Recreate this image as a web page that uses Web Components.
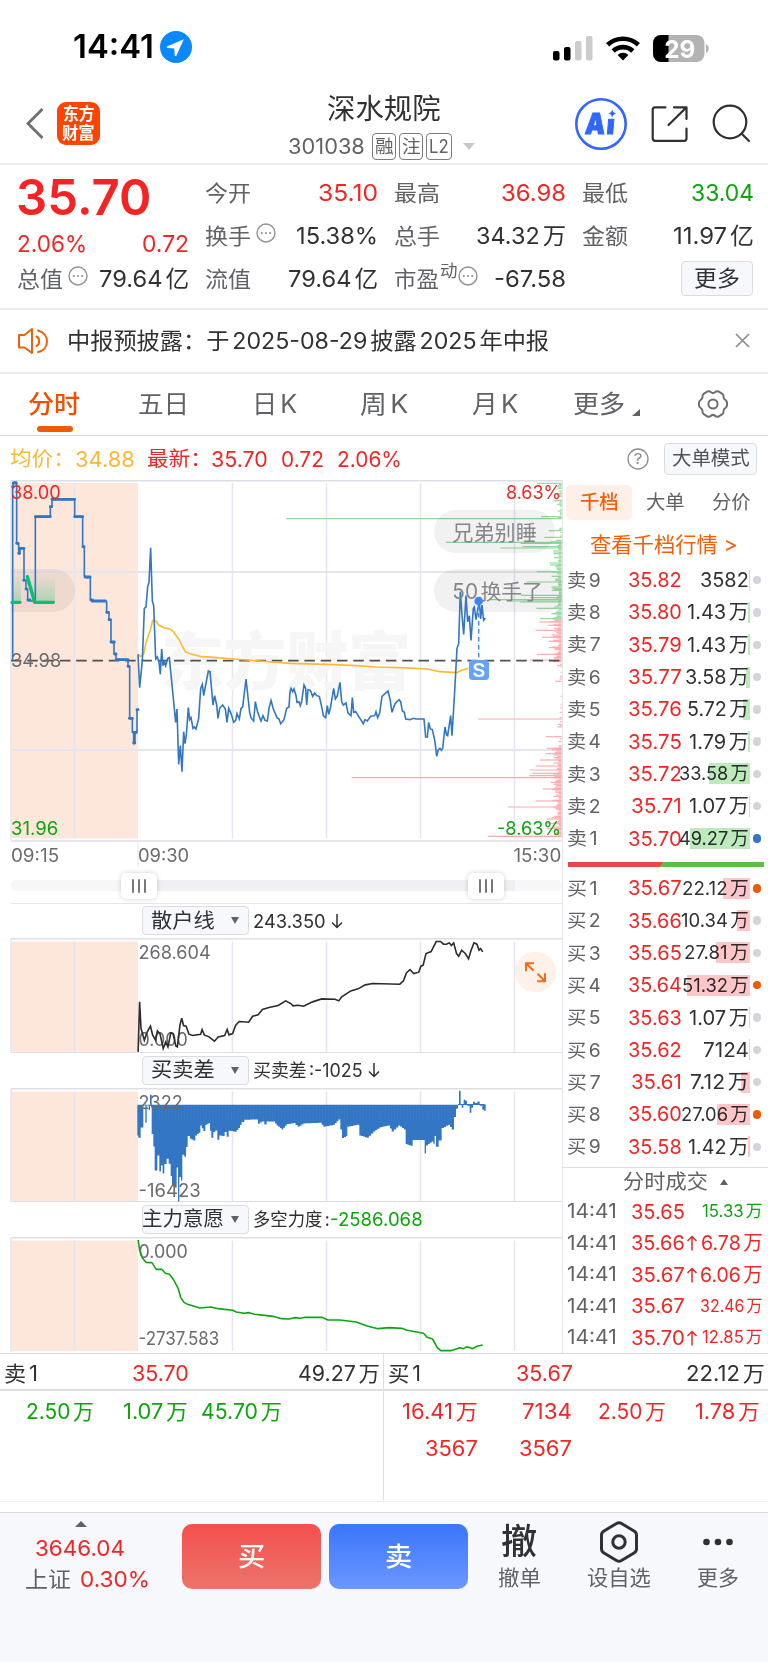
<!DOCTYPE html>
<html lang="zh-CN">
<head>
<meta charset="utf-8">
<title>深水规院 301038</title>
<style>
html,body{margin:0;padding:0}
body{width:768px;height:1662px;overflow:hidden;background:#fff;color:#303133;font-family:Inter,"Noto Sans CJK SC",sans-serif;line-height:1;text-autospace:normal}
</style>
</head>
<body>
<stock-page></stock-page>
<script>
const RED='#f52424',GREEN='#0ca50c',GRAY='#606266',DARK='#303133',LINE='#dcdee5',BLUE='#3276c4';
class Base extends HTMLElement{
  connectedCallback(){
    if(this.shadowRoot)return;
    const r=this.attachShadow({mode:'open'});
    r.innerHTML='<style>*{box-sizing:border-box}:host{display:block;box-sizing:border-box}svg{display:block}'+this.css()+'</style>'+this.html();
    this.ready&&this.ready(r);
  }
  css(){return''} html(){return''}
}
// Text whose glyphs span a given width; side bearings hang outside the box
customElements.define('fit-text',class extends Base{
  css(){
    const g=n=>this.getAttribute(n),s=g('s')||20;
    return `:host{display:inline-block;flex:none;white-space:nowrap;width:${g('w')}px;font-size:${s}px;line-height:1;${g('c')?`color:${g('c')};`:''}font-weight:${g('b')||400}}span{display:inline-block;transform-origin:0 50%;margin-left:${-.045*s}px}`;
  }
  html(){return '<span><slot></slot></span>'}
  ready(r){
    const s=r.querySelector('span'),n=s.getBoundingClientRect().width;
    if(n)s.style.transform=`scaleX(${(+this.getAttribute('w')+.09*this.getAttribute('s'))/n})`;
  }
});
const T=(t,w,s,c='',b=400)=>`<fit-text w="${w}" s="${s}" c="${c}" b="${b}">${t}</fit-text>`;
const ST=(t,x,cy,w,s,c,extra='')=>`<text x="${x-.03*s}" y="${cy+s*.364}" font-size="${s}" fill="${c}" textLength="${w+.07*s}" lengthAdjust="spacingAndGlyphs" ${extra}>${t}</text>`;

customElements.define('status-bar',class extends Base{
  css(){return `:host{height:95px;padding:2px 58px 0 74px;display:flex;align-items:center;justify-content:space-between;color:#000}.l,.r{display:flex;align-items:center}.l{gap:8px;padding-bottom:3px}.r{padding-bottom:3px}`}
  html(){return `<div class="l">${T('14:41',78,32,'#000',600)}
  <svg width="32" height="32" viewBox="0 0 32 32"><circle cx="16" cy="16" r="16" fill="#0a88fe"/><path d="M23.8 8.2 7.4 15.3c-1 .5-.7 1.8.3 1.8l6.6.3.4 6.8c.1 1 1.4 1.3 1.8.3z" fill="#fff"/></svg></div>
  <svg width="157" height="28" viewBox="553 32 157 28">
  <rect x="553" y="48" width="6.5" height="9.5" rx="2"/><rect x="564" y="44" width="6.5" height="13.5" rx="2"/><rect x="575" y="38" width="6.5" height="19.5" rx="2" fill="#ccc"/><rect x="586" y="33" width="6.5" height="24.5" rx="2" fill="#ccc"/>
  <g fill="none" stroke="#000" stroke-width="4.6"><path d="M607.6 41.8a22.5 22.5 0 0 1 30.8 0"/><path d="M613.2 48a14.3 14.3 0 0 1 19.6 0"/></g><path d="M623 57.5 617.6 52a7.8 7.8 0 0 1 10.8 0z"/>
  <clipPath id="b"><rect x="653" y="32" width="51.500" height="27" rx="8"/></clipPath><g clip-path="url(#b)"><path fill="#b3b3b3" d="M653 32h52v27h-52z"/><path d="M653 32h15.500v27H653z"/></g><path d="M706 41c3.500 1 3.500 8 0 9z" fill="#b3b3b3"/>
  ${ST('29',665,45.7,29.500,24.500,'#fff','font-weight="700"')}</svg>`}
});

customElements.define('nav-header',class extends Base{
  css(){return `:host{height:70px;border-bottom:2px solid #ececee;display:grid;grid-template-columns:288px 1fr 193px;padding:0}
  .l{display:flex;align-items:center;gap:13px;padding:0 0 11px 26px}.logo{width:43px;height:43px;border-radius:9px;background:#fd4402;display:flex;flex-direction:column;align-items:center;justify-content:center;gap:2px;padding-top:0}
  .m{padding-left:1px}.t{display:flex;justify-content:center;width:190px;height:29px}.c{display:flex;align-items:center;height:27px;margin-top:9px}
  .bd{height:27px;border:1.500px solid #7d7d80;border-radius:4px;display:flex;align-items:center;justify-content:center;margin-right:3px}
  .tri{border:6px solid transparent;border-top:7px solid #c8c8cb;border-bottom:0;margin-left:11px}`}
  html(){return `<div class="l"><svg width="18" height="31" viewBox="0 0 18 31"><path d="M16.500 1 2 15.500 16.500 30" fill="none" stroke="#6e6e70" stroke-width="2.800"/></svg>
  <div class="logo">${T('东方',30,17,'#fff',700)}${T('财富',31,17,'#fff',700)}</div></div>
  <div class="m"><div class="t">${T('深水规院',111,28,'#303133')}</div><div class="c">${T('301038',75,21,GRAY)}<span style="width:8px"></span><span class="bd" style="width:24px">${T('融',17,18,GRAY)}</span><span class="bd" style="width:24px">${T('注',17,18,GRAY)}</span><span class="bd" style="width:26px;margin:0">${T('L2',18,18,GRAY)}</span><i class="tri"></i></div></div>
  <svg width="193" height="66" viewBox="575 95 193 66"><circle cx="601" cy="124" r="24.700" fill="none" stroke="#3366ff" stroke-width="2.600"/>
  <g transform="translate(584 110.500) skewX(-5)" fill="#3366ff"><text x="2.500" y="23" font-size="29" font-weight="900" textLength="20" lengthAdjust="spacingAndGlyphs" stroke="#3366ff" stroke-width="1">A</text><text x="24" y="23" font-size="27" font-weight="900" textLength="8" lengthAdjust="spacingAndGlyphs" stroke="#3366ff">ı</text></g>
  <path d="M612.300 109.500c1 2.800 1.300 3 4 4-2.700 1-3 1.300-4 4-1-2.700-1.300-3-4-4 2.700-1 3-1.200 4-4z" fill="#3366ff"/>
  <g fill="none" stroke="#2f3032" stroke-width="2.200" stroke-linecap="round" stroke-linejoin="round"><path d="M665.500 107.300h-10.300q-2.500 0-2.500 2.500v28.500q0 2.500 2.500 2.500h29q2.300 0 2.300-2.500v-9.800M674 107.300h12.500V119M686 107.800 668.500 125"/><circle cx="730" cy="122" r="16.300"/><path d="m742 134 7 7"/></g></svg>`}
});

const more=`<svg width="20" height="20" viewBox="0 0 20 20"><circle cx="10" cy="10" r="9" fill="none" stroke="#8f9196" stroke-width="1.400"/><g fill="#8f9196"><circle cx="5.800" cy="10" r="1.100"/><circle cx="10" cy="10" r="1.100"/><circle cx="14.200" cy="10" r="1.100"/></g></svg>`;
customElements.define('quote-panel',class extends Base{
  css(){return `:host{height:145px;border-bottom:2px solid #ececee;display:grid;grid-template-columns:170px 171px 170px 170px;column-gap:18px;padding:7px 16px 0 18px}
  .col{display:grid;grid-template-rows:43px 43px 43px}.col.f{grid-template-rows:50px 44px 27px}.r{display:flex;align-items:center;justify-content:space-between}.k{display:flex;align-items:center;margin-top:-2px}.k svg{margin:-6px 0 0 2px}sup{display:flex;margin:-15px -1px 0 3px;font-size:0;line-height:0;vertical-align:baseline}
  .btn{width:72px;height:35px;border:1px solid #dadce4;border-radius:4px;background:#f7f8fb;display:flex;align-items:center;justify-content:center;margin:-3px 0 0 auto}`}
  html(){
    const r=(k,kw,v,vw,c=DARK,x='')=>`<div class="r"><span class="k">${T(k,kw,22,GRAY)}${x}</span>${T(v,vw,23,c)}</div>`;
    return `<div class="col f"><div class="r" style="align-items:flex-start">${T('35.70',131,50,RED,600)}</div><div class="r">${T('2.06%',68,23,RED)}${T('0.72',45,23,RED)}</div>${r('总值',44,'79.64亿',88,DARK,`<span style="width:4px"></span>${more}`)}</div>
    <div class="col">${r('今开',44,'35.10',58,RED)}${r('换手',44,'15.38%',80,DARK,`<span style="width:4px"></span>${more}`)}${r('流值',44,'79.64亿',88)}</div>
    <div class="col">${r('最高',44,'36.98',63,RED)}${r('总手',44,'34.32万',88)}${r('市盈',43,'-67.58',70,DARK,`<sup>${T('动',16,17,GRAY)}</sup>${more}`)}</div>
    <div class="col">${r('最低',44,'33.04',61,GREEN)}${r('金额',44,'11.97亿',79)}<div class="r"><span class="btn">${T('更多',44,22,DARK)}</span></div></div>`}
});

customElements.define('notice-bar',class extends Base{
  css(){return `:host{height:63.500px;border-bottom:2px solid #ececee;display:flex;align-items:center;padding:0 18px}.x{margin-left:auto}`}
  html(){return `<svg width="50" height="28" viewBox="0 0 50 28"><g fill="none" stroke="#f0600a" stroke-width="2" stroke-linejoin="round" stroke-linecap="round"><path d="M1 8h5.500L14 2v24l-7.500-5.500H1z"/><path d="M18.500 9.500c3.500 1.500 3.500 8 0 9.500M20 3.500c12 3 12 19 0 21.500"/></g></svg>${T('中报预披露：于2025-08-29披露2025年中报',480,22.500,DARK)}<svg class="x" width="15" height="15" viewBox="0 0 15 15"><path d="m1 1 13 13M14 1 1 14" stroke="#8a8c90" stroke-width="1.700"/></svg>`}
});

customElements.define('period-tabs',class extends Base{
  css(){return `:host{height:62.500px;border-bottom:1.500px solid #d9dbe2;display:grid;grid-template-columns:109px 110px 111px 110px 110px 98px 120px;color:${GRAY}}
  div{display:flex;align-items:center;justify-content:center;position:relative}.on{color:#f05a05}.on:after{content:"";position:absolute;bottom:3.500px;width:36px;height:6px;border-radius:3px;background:#f05a05}
  svg.t{position:absolute;right:18px;bottom:19px}`}
  html(){return `<div class="on">${T('分时',50,25,'#f05000',500)}</div><div>${T('五日',49,25)}</div><div>${T('日K',43,25)}</div><div style="padding-right:2px">${T('周K',46,25)}</div><div>${T('月K',44,25)}</div><div>${T('更多',50,25)}<svg class="t" style="right:8px" width="8" height="7"><path d="M8 0v7H0z" fill="#606266"/></svg></div>
  <div style="padding-left:10px"><svg width="32" height="32" viewBox="-16 -16 32 32"><g fill="none" stroke="#6c6e72" stroke-width="2"><path d="M-5.500-12.500q2-.8 3.500.8 2 1.600 4 0 1.500-1.600 3.500-.8l3.800 2.300q1.500 1.200 1.200 3.200 0 2.200 2 3.200 1.500.8 1.500 2.600v2.400q0 1.800-1.500 2.600-2 1-2 3.200.3 2-1.200 3.200l-3.800 2.300q-2 .8-3.500-.8-2-1.600-4 0-1.500 1.600-3.500.8l-3.800-2.300q-1.500-1.200-1.200-3.200 0-2.200-2-3.200-1.500-.8-1.500-2.600v-2.400q0-1.800 1.500-2.600 2-1 2-3.200-.3-2 1.200-3.200z"/><circle r="4.600"/></g></svg></div>`}
});

customElements.define('legend-bar',class extends Base{
  css(){return `:host{height:46px;display:flex;align-items:center;padding:0 11px 0 11px;margin-bottom:0}.b{width:93px;height:32px;border:1px solid #dadce4;border-radius:4px;background:#f7f8fb;display:flex;align-items:center;justify-content:center;margin-left:15px}svg{margin-left:auto}`}
  html(){const Y='#fbb836',s=n=>`<span style="width:${n}px"></span>`;return `${T('均价：',63,20.500,Y)}${s(2)}${T('34.88',58,21,Y)}${s(14)}${T('最新：',63,20.500,RED)}${s(1)}${T('35.70',55,21,RED)}${s(15)}${T('0.72',41,21,RED)}${s(15)}${T('2.06%',63,21,RED)}
  <svg width="22" height="22" viewBox="-11 -11 22 22"><circle r="10" fill="none" stroke="#8a8c90" stroke-width="1.300"/>${ST('?',-4,0,8,15,'#8a8c90')}</svg><span class="b">${T('大单模式',76,19.500,'#505256')}</span>`}
});

const grid=(y0,y1)=>`<path d="M11 ${y0}H138V${y1}H11z" fill="#fde6da"/><path d="M11 ${y0-3}V${y1+2}M74.500 ${y0}V${y1}M232.500 ${y0}V${y1}M326.500 ${y0}V${y1}M420.500 ${y0}V${y1}M514.500 ${y0}V${y1}" stroke="#e3e6ee" stroke-width="1.500"/>`;
customElements.define('minute-chart',class extends Base{
  css(){return `:host{height:391px}path,line{vector-effect:non-scaling-stroke}`}
  depth(){
    let s='',seed=7;const rnd=()=>(seed=(seed*16807)%2147483647)/2147483647;
    const g=[[25,770],[77,820],[125,783],[131,19],[167,806],[187,793],[202,498],[205,722],[215,727],[219,661],[234,821],[270,810],[290,770],[321,740],[346,815],[361,723],[368,750],[374,630],[378,690],[381,720],[400,769],[416,820],[431,780]];
    const r=[[441,778],[451,804],[466,767],[487,786],[499,806],[518,806],[538,770],[555,750],[619,826],[732,594],[785,798],[820,800],[836,796],[855,779],[873,767],[885,750],[895,757],[902,748],[908,215],[922,812],[942,788],[978,767],[996,684],[1032,800],[1045,795],[1060,800],[1084,624]];
    let m=(arr,c)=>arr.forEach(([y,x])=>s+=`<path d="M${x} ${y}H845" stroke="${c}"/>`);
    for(let y=28;y<1088;y+=4){const q=y<130?.75:y<200?.35:y>560&&y<810?.35:1;if(rnd()>q)continue;const d=y>560&&y<810?12:y<200?18:30;s+=`<path d="M${845-3-rnd()*rnd()*d-(q==1?5:0)} ${y}H845" stroke="${y<436?'#93dc9b':'#ffa9ad'}"/>`}
    m(g,'#93d89a');m(r,'#ffa9ad');return s}
  html(){return `<svg width="563" height="391" viewBox="0 480 563 391">
  ${grid(483,838.5)}<path d="M11 480.700H563M11 841H563" stroke="#dcdee6" stroke-width="1.600"/><path d="M11 572H562M11 750H562" stroke="#e3e6ee" stroke-width="1.800"/><path d="M138 841v25" stroke="#e3e6ee"/>
  <text x="161" y="684" font-size="63" font-weight="900" fill="#f6f6f7" textLength="250">东方财富</text>
  <g transform="translate(280 475) scale(.33333)" fill="none" stroke-width="1.150">${this.depth()}</g>
  <path d="M434 531.500a21.500 21.500 0 0 1 21.500-21.500H533.500a21.500 21.500 0 0 1 0 43H455.500a21.500 21.500 0 0 1-21.500-21.500zM434 590.500a21.500 21.500 0 0 1 21.500-21.500H549q12 3 13 14v15q-2 12-13 14H455.500a21.500 21.500 0 0 1-21.500-21.500zM11 569H53.500a21.500 21.500 0 0 1 0 43H11z" fill="#000" fill-opacity=".055"/>
  <path d="M11 660.700H562" stroke="#505050" stroke-width="1.700" stroke-dasharray="10.500 5.800"/>
  <linearGradient id="g" x1="0" y1="0" x2="0" y2="1"><stop stop-color="#08c070" stop-opacity="0"/><stop offset="1" stop-color="#08c070" stop-opacity=".28"/></linearGradient><path d="M12 575h9v27h-9zM27 575h28v27H34z" fill="url(#g)"/>
  <g transform="translate(0 475) scale(.33333)" fill="none" stroke="${BLUE}" stroke-width="1.600" stroke-linejoin="round">
  <path d="M38 556V35L41 22H50V205H56V236H60V219L72 222V315H78V342H83V374L90 378H106V125H151V95H156V73H224V125H248V215H253V301L260 308 271 306V374L276 378H316L320 381V412H327V434H333V501L342 504V538L348 540V554H384V574H389V730H397V772H401V805H405V772H411V704"/>
  <path d="M106 125h45M156 73h68M224 125h24M276 378h40M350 554h34M388 730h9M255 306h15M273 375h4M40 24h8M38 35h1M50 205h4M56 235h2M60 220h12M71 316h2M78 342h2M84 375h6M151 95h4M249 215h3M320 412h5M327 434h4M333 501h10M345 537h3M384 574h3M401 804h3M403 772h6M411 704h3" stroke-width="2.900" stroke-linecap="round"/>
  <path stroke="#ffb832" d="M415 538 421 544 431 538 438 502 446 480 452 462 458 436 468 438 476 450 492 458 512 463 520 470 536 492 548 516 556 530 570 536 600 544 640 547 700 552 780 558 870 565 980 568 1070 572 1130 576 1200 578 1280 582 1320 590 1370 593 1385 586 1405 580"/>
  <path stroke-linejoin="miter" d="M414 538 419 638 427 556 433 400 438 396 443 335 447 322 452 218 457 378 461 392 467 552 472 546 477 562 481 598 485 522 489 572 493 560 497 572 503 550 508 548 527 742 531 702 536 868 541 812 546 890 551 770 555 806 559 780 565 698 569 734 573 728 579 760 583 756 588 762 596 730 602 640 607 628 611 662 625 588 630 590 639 690 644 662 650 690 654 730 659 700 668 690 676 702 681 742 686 700 694 718 701 742 707 736 711 716 718 732 723 700 728 696 738 612 749 712 753 728 761 738 766 680 773 712 783 738 789 722 795 736 802 738 807 700 813 676 820 702 831 728 837 732 842 746 852 734 860 700 867 696 870 650 873 640 878 650 882 642 888 662 891 682 897 680 901 692 905 680 912 630 917 640 920 690 924 644 931 646 938 664 944 654 950 662 958 664 966 700 970 722 977 728 982 692 986 718 991 700 1001 640 1006 672 1012 662 1020 622 1025 680 1030 690 1038 684 1044 714 1053 722 1057 668 1061 712 1067 710 1090 746 1095 734 1102 738 1112 724 1124 722 1128 710 1133 728 1139 714 1146 664 1164 648 1170 672 1176 712 1185 686 1197 674 1202 680 1207 708 1213 712 1217 732 1230 734 1240 730 1248 732 1272 732 1277 786 1282 786 1286 742 1291 762 1297 764 1305 800 1310 844 1315 824 1320 820 1324 826 1328 820 1335 756 1340 780 1343 782 1352 722 1356 782 1364 650 1371 520 1376 506 1381 350 1386 420 1391 478 1398 362 1403 440 1408 422 1413 496 1420 400 1423 396 1428 434 1434 400 1438 380 1442 432 1446 390 1451 436 1456 430"/>
  <path d="M36 382H60M82 305 104 382H160" stroke="#08bf72" stroke-width="3.400" stroke-linecap="round"/></g>
  <path d="M478.700 605v56" stroke="#3d8bfd" stroke-width="1.400" stroke-dasharray="4.500 3.500"/><circle cx="478.700" cy="601" r="4.300" fill="#3d85f0"/><rect x="469" y="660" width="20" height="20" rx="3.500" fill="#62a3fb"/>${ST('S',472.700,670,12,18,'#fff','font-weight="600"')}
  ${ST('兄弟别睡',453,532,83,21,'#85868a')}${ST('50换手了',453,591.500,89,21,'#85868a')}
  ${ST('38.00',11.500,492.700,48.500,18,RED)}${ST('34.98',11.500,660.500,49,18,'#6a6b6e')}${ST('31.96',11.500,828,46,18,'#0ca50c')}${ST('8.63%',506.500,492.700,54,18,RED)}${ST('-8.63%',497.500,828,63,18,'#0ca50c')}
  ${ST('09:15',11.500,855.500,47,18,'#6a6b6e')}${ST('09:30',138.500,855.500,50,18,'#6a6b6e')}${ST('15:30',514,855.500,46.500,18,'#6a6b6e')}</svg>`}
});

customElements.define('range-slider',class extends Base{
  css(){return `:host{height:33px;margin-left:11px;display:grid;align-items:center;padding-bottom:4px;position:relative;border-bottom:1.500px solid #e4e6eb}.t{height:11px;border-radius:5px;background:linear-gradient(90deg,#f7f7fa 128px,#f0f0f4 128px 504px,#f7f7fa 504px)}
  i{position:absolute;top:2px;width:36px;height:26px;border-radius:5px;background:#fff;box-shadow:0 0 5px rgba(0,0,0,.18);display:flex;gap:3.500px;align-items:center;justify-content:center}b{width:2.200px;height:14px;background:#77787c;border-radius:1px}`}
  html(){return `<div class="t"></div><i style="left:110px"><b></b><b></b><b></b></i><i style="left:457px"><b></b><b></b><b></b></i>`}
});

customElements.define('indicator-head',class extends Base{
  css(){return `:host{height:${this.getAttribute('h')}px;flex:none;display:flex;align-items:center;padding-left:142px;font-size:19px;color:${DARK}}.b{width:107px;height:29px;border:1px solid #d9dce3;border-radius:4px;background:#f7f8fb;display:flex;align-items:center;padding:0 9px 0 ${this.hasAttribute('wide')?0:9}px;justify-content:space-between;margin-right:5px}i{border:4px solid transparent;border-top:7px solid #606266;border-bottom:0}`}
  html(){const w=this.hasAttribute('wide');return `<span class="b">${T(this.getAttribute('name'),w?80:62,20.500,DARK)}<i></i></span><slot></slot>`}
});

const barPts=[[22,150],[25,157],[32,126],[40,60],[46,112],[50,60],[56,74],[60,60],[65,146],[70,183],[74,255],[82,210],[88,258],[93,240],[98,264],[103,236],[110,220],[116,235],[122,272],[126,300],[135,306],[140,246],[144,348],[148,275],[153,285],[157,208],[163,214],[168,185],[173,152],[180,160],[190,165],[196,150],[206,142],[211,120],[220,137],[226,118],[236,113],[240,136],[244,157],[250,140],[256,135],[262,163],[268,150],[278,152],[284,140],[290,154],[296,136],[315,139],[325,128],[335,110],[343,103],[380,102],[384,115],[395,108],[403,117],[410,108],[430,108],[440,120],[455,132],[470,116],[490,113],[503,124],[520,114],[570,112],[580,124],[610,118],[625,102],[631,132],[636,158],[648,152],[652,124],[680,118],[688,150],[710,157],[730,138],[748,126],[775,120],[785,138],[805,120],[822,132],[827,176],[842,181],[848,164],[884,204],[888,180],[905,168],[910,175],[914,152],[918,184],[926,165],[935,128],[955,118],[965,132],[972,95],[978,70],[984,58]];
customElements.define('sub-chart',class extends Base{
  css(){return `:host{display:block;flex:none}path{vector-effect:non-scaling-stroke}`}
  html(){
    const k=this.getAttribute('kind');
    const top=k=='a'?938.5:k=='b'?1088.3:1237.7,H=k=='a'?115:k=='b'?114:115.3,y0=top+2.800,y1=k=='a'?1051.500:k=='b'?1201:1351;
    let body='';
    if(k=='a')body=ST('268.604',139,952,71,18,'#6a6b6e')+ST('0.000',139,1039.500,48,18,'#6a6b6e')+`<g transform="translate(0 900) scale(.3635 .33333)"><path fill="none" stroke="#2b2b2b" stroke-width="1.600" d="M380 455 384 305 388 385 392 400 397 420 405 395 414 378 420 405 428 420 433 392 440 400 449 445 456 425 462 440 470 398 476 400 484 438 488 440 495 375 500 354 505 376 512 378 520 402 530 406 552 402 556 388 562 404 575 410 590 423 600 410 618 406 625 388 630 404 640 400 648 376 658 364 684 366 695 348 710 344 722 328 740 322 765 316 786 302 800 310 806 317 820 315 835 318 860 305 885 296 922 297 932 302 940 290 965 272 985 266 1005 254 1025 250 1100 252 1110 242 1118 218 1128 208 1138 220 1152 216 1158 198 1164 195 1172 160 1186 154 1200 124 1212 124 1220 132 1228 132 1236 128 1242 136 1248 128 1256 160 1262 168 1270 150 1280 160 1289 176 1296 150 1304 128 1312 132 1318 150 1322 145 1328 155"/></g><circle cx="535.500" cy="971.700" r="20.500" fill="#fef1ea"/><path d="M526 971v-8h8M526.500 963.500l7 7M545 973v8h-8M544.500 980.500l-7-7" fill="none" stroke="#f26a1b" stroke-width="2"/>`;
    if(k=='b'){
      let d='M22 58';barPts.forEach(([x,y],i)=>{const n=barPts[i+1]||[988,58];const steps=Math.max(1,Math.round((n[0]-x)/6));for(let j=0;j<steps;j++){const a=x+(n[0]-x)*j/steps,b=x+(n[0]-x)*(j+1)/steps,yy=y+(Math.abs(n[1]-y)<30?(n[1]-y)*j/steps:0);d+=`L${a.toFixed(1)} ${yy.toFixed(1)}L${b.toFixed(1)} ${yy.toFixed(1)}`}});d+='V58z';
      let st='';for(let x=70;x<970;x+=9.400)st+=`M${x.toFixed(1)} 62V104`;
      body=`<g transform="translate(130 1085) scale(.33333)"><path d="${d}" fill="${BLUE}"/><path d="${st}" stroke="#6fa3dc" stroke-opacity=".25" stroke-width=".6"/><path d="M60 28h5v32h-5zM987 16h5v43h-5zM995 58h5v9h-5zM1001 43h5v16h-5zM1006 46h5v12h-5zM1011 57h8v4h-8zM1019 58h5v24h-5zM1024 58h5v9h-5zM1029 49h6v9h-6zM1035 53h7v5h-7zM1042 48h7v10h-7zM1049 56h8v5h-8zM1057 57h5v16h-5zM1062 57h5v19h-5zM984 56h80v3h-80z" fill="${BLUE}"/></g>`+ST('2322',139,1102,43,18,'#6a6b6e')+ST('-16423',139,1190,61,18,'#6a6b6e');
    }
    if(k=='c')body=ST('0.000',139,1251.500,48,18,'#6a6b6e')+ST('-2737.583',139,1338,79.500,18,'#6a6b6e')+`<g transform="translate(0 1120) scale(.3635 .33333)"><path fill="none" stroke="#0ea312" stroke-width="1.600" stroke-linejoin="round" d="M380 360 384 390 392 415 402 427 418 428 430 448 445 448 455 460 466 463 478 480 490 505 497 532 506 547 516 553 550 564 580 561 600 566 640 571 650 576 672 580 685 578 700 583 735 587 755 590 775 596 795 597 810 593 825 595 840 592 885 592 902 600 935 600 980 606 1010 618 1040 626 1070 623 1105 625 1120 631 1165 640 1175 652 1190 657 1203 683 1213 692 1240 692 1265 683 1275 686 1285 680 1300 686 1312 679 1328 675"/></g>`;
    return `<svg width="563" height="${H}" viewBox="0 ${top-.7} 563 ${H}">${grid(y0,y1)}<path d="M11 ${top}H562" stroke="#dddfe5" stroke-width="1.400"/>${k=='c'?'':`<path d="M11 ${y1+(k=='a'?1:.300)}H562" stroke="#dddfe5" stroke-width="1.500"/>`}${body}</svg>`}
});

customElements.define('order-book',class extends Base{
  css(){return `:host{height:688px;padding:5px 0 0 3px;border-bottom:1.500px solid ${LINE}}
  .tabs{display:grid;grid-template-columns:66px 66px 66px;height:35px;align-items:center}.tabs>*{display:flex;align-items:center;justify-content:center;height:35px}.on{background:#fef0e8;border-radius:5px}
  .link{height:40px;padding:8px 0 0 25px;display:flex;align-items:center;margin-bottom:4px}
  .row{display:grid;grid-template-columns:33px 80px 67px 17px;align-items:center;height:32.300px;padding-left:2px}.row>*{display:flex;align-items:center}.p,.v{justify-content:flex-end}.v{position:relative;height:21px}
  .bar{position:absolute;right:-2px;top:0;height:21px;mix-blend-mode:multiply}.dot{width:8.400px;height:8.400px;border-radius:50%;margin-left:4.500px}
  .ratio{height:17.500px;padding:7px 4px 5.500px 2px;margin-top:0}.ratio svg{width:196px}`}
  html(){
    const row=(s,n,p,v,vw,bar,dot)=>`<div class="row"><span>${T(`${s}${n}`,n==1?29:32,18.500,GRAY)}</span><span class="p">${T(p,p.endsWith('1')?49:52,20,RED)}</span><span class="v">${T(v,vw,vw>62?19:20,DARK)}<i class="bar" style="width:${bar}px;background:${s=='卖'?'#bde9bd':'#fec6c8'}"></i></span><i class="dot" style="background:${dot||'#d2d5dc'}"></i></div>`;
    const S=[['35.82','3582',47,1],['35.80','1.43万',60,2],['35.79','1.43万',60,2],['35.77','3.58万',62,4],['35.76','5.72万',60,7],['35.75','1.79万',58,2],['35.72','33.58万',68,41],['35.71','1.07万',58,1],['35.70','49.27万',68,60,BLUE]];
    const B=[['35.67','22.12万',65,27,'#f05a05'],['35.66','10.34万',66,13],['35.65','27.81万',63,34],['35.64','51.32万',65,63,'#f05a05'],['35.63','1.07万',58,1],['35.62','7124',44,1],['35.61','7.12万',57,9],['35.60','27.06万',66,33,'#f05a05'],['35.58','1.42万',59,2]];
    return `<div class="tabs"><span class="on">${T('千档',37,19,'#f85c08',500)}</span><span>${T('大单',37,19,GRAY)}</span><span>${T('分价',37,19,GRAY)}</span></div><div class="link">${T('查看千档行情 &gt;',146,21,'#f85c08')}</div>
    ${S.map((r,i)=>row('卖',9-i,...r)).join('')}<div class="ratio"><svg width="196" height="5"><path fill="#ec4545" d="M0 0h96l-4 5H0z"/><path fill="#5bbf45" d="M96 0h100v5H92z"/></svg></div>${B.map((r,i)=>row('买',i+1,...r)).join('')}`}
});

customElements.define('trade-ticks',class extends Base{
  css(){return `:host{height:185px;padding:0 6px 0 5px}.h{height:28px;display:flex;align-items:center;padding-left:56px;gap:13px}i{border:4.500px solid transparent;border-bottom:6px solid #606266;border-top:0}
  .r{height:31.500px;display:grid;grid-template-columns:64px 54px 13px 1fr;align-items:center}.r>:last-child{justify-self:end}`}
  html(){const U='<svg width="12" height="16" viewBox="0 0 12 16"><path d="M6 15.500V1.500M1.500 6 6 1.500 10.500 6" fill="none" stroke="#f52424" stroke-width="1.500"/></svg>';
  return `<div class="h">${T('分时成交',83,20.500,GRAY)}<i></i></div>`+[['35.65',0,'15.33万',59,17,GREEN],['35.66',1,'6.78万',60,20,RED],['35.67',1,'6.06万',61,20,RED],['35.67',0,'32.46万',61,17,RED],['35.70',1,'12.85万',59,17,RED]].map(a=>`<div class="r">${T('14:41',48,19.500,GRAY)}${T(a[0],52,20,RED)}<span>${a[1]?U:''}</span>${T(a[2],a[3],a[4],a[5])}</div>`).join('')}
});

customElements.define('queue-panel',class extends Base{
  css(){return `:host{height:149px;border-top:1.500px solid ${LINE};border-bottom:1.500px solid #ebecee;display:grid;grid-template-columns:383px 385px;padding-bottom:1px}
  .s+.s{border-left:1.500px solid ${LINE}}.h{height:36.500px;border-bottom:2px solid ${LINE};display:grid;grid-template-columns:128px 1fr 1fr;align-items:center;padding:4px 4px 0 5px}.h>:nth-child(3){justify-self:end}
  .q{display:grid;grid-template-columns:repeat(4,94px);grid-auto-rows:37px;align-items:center;padding:2px 0 0}.q>*{justify-self:end}`}
  html(){const side=(a,w,p,v,vw,off,c,q)=>`<div class="s"><div class="h">${T(a,w,21,DARK)}${T(p,55,21,RED)}${T(v,vw,21,DARK)}</div><div class="q" style="margin-left:${off}px">${q.map(x=>T(x[0],x[1],21,c)).join('')}</div></div>`;
  return side('卖1',32,'35.70','49.27万',80,-1,GREEN,[['2.50万',66],['1.07万',63],['45.70万',79]])+side('买1',31,'35.67','22.12万',77,-1,RED,[['16.41万',74],['7134',48],['2.50万',66],['1.78万',63],['3567',51],['3567',51]])}
});

customElements.define('trade-bar',class extends Base{
  css(){return `:host{height:150px;margin-top:10px;border-top:1.500px solid #d9dbe2;background:#f7f8fb;display:flex;align-items:flex-start}
  .i{width:182px;display:flex;flex-direction:column;align-items:flex-start;padding:8px 0 0 26px}.i i{border:6px solid transparent;border-bottom:6.500px solid #606266;border-top:0;margin-left:49px}.i>fit-text{margin:10px 0 0 10px}.i div{display:flex;gap:11px;margin-top:9px}
  .b{width:139px;height:65px;margin:11px 8px 0 0;border-radius:10px;display:flex;align-items:center;justify-content:center}.buy{background:linear-gradient(#f4504c,#ec736c)}.sell{background:linear-gradient(#3a76fb,#6b97fe)}
  .m{display:flex;flex-direction:column;align-items:center;justify-content:flex-start;width:100px;height:80px}.ic{height:54px;display:flex;align-items:center;padding-top:3px}`}
  html(){return `<div class="i"><i></i>${T('3646.04',88,22,RED)}<div>${T('上证',44,22,GRAY)}${T('0.30%',68,22,RED)}</div></div><div class="b buy">${T('买',25,26,'#fff',500)}</div><div class="b sell">${T('卖',25,26,'#fff',500)}</div>
  <div class="m" style="width:86px"><span class="ic">${T('撤',33,35,DARK,500)}</span>${T('撤单',41,21,GRAY)}</div>
  <div class="m" style="width:114px"><span class="ic"><svg width="40" height="42" viewBox="-20 -21 40 42"><g fill="none" stroke="#303133" stroke-width="3" stroke-linejoin="round"><path d="M-2.500-18.500Q0-20 2.500-18.500L15-11Q17.500-9.500 17.500-7V7q0 2.500-2.500 4L2.500 18.500Q0 20-2.500 18.500L-15 11q-2.500-1.500-2.500-4V-7q0-2.500 2.500-4z"/><circle r="6.200"/></g></svg></span>${T('设自选',62,21,GRAY)}</div>
  <div class="m" style="width:84px"><span class="ic"><svg width="30" height="8"><g fill="#303133"><circle cx="3.500" cy="4" r="3.300"/><circle cx="15" cy="4" r="3.300"/><circle cx="26.500" cy="4" r="3.300"/></g></svg></span>${T('更多',40,21,GRAY)}</div>`}
});

const DOWN='<svg width="20" height="16" viewBox="-9 0 20 16"><path d="M3 1v13M-2 9.500 3 14.500 8 9.500" fill="none" stroke="#303133" stroke-width="1.500"/></svg>';
customElements.define('stock-page',class extends Base{
  css(){return `:host{width:768px;height:1662px;background:#fff;display:block}.main{display:grid;grid-template-columns:562px 206px;height:873px;margin-top:-2px}.l,.r{min-width:0}.r{border-left:1.500px solid #e3e5eb}.l{overflow:hidden;display:flex;flex-direction:column}minute-chart,range-slider{flex:none}`}
  html(){return `<status-bar></status-bar><nav-header></nav-header><quote-panel></quote-panel><notice-bar></notice-bar><period-tabs></period-tabs><legend-bar></legend-bar>
  <div class="main"><div class="l"><minute-chart></minute-chart><range-slider></range-slider>
  <indicator-head name="散户线" h="33.8">${T('243.350',71,18.500,DARK)}${DOWN}</indicator-head><sub-chart kind="a"></sub-chart>
  <indicator-head name="买卖差" h="34.8">${T('买卖差:-1025',108,18.500,DARK)}${DOWN}</indicator-head><sub-chart kind="b"></sub-chart>
  <indicator-head name="主力意愿" wide h="35.4">${T('多空力度:',75,18.500,DARK)}<span style="width:2px"></span>${T('-2586.068',91,18.500,GREEN)}</indicator-head><sub-chart kind="c"></sub-chart></div>
  <div class="r"><order-book></order-book><trade-ticks></trade-ticks></div></div><queue-panel></queue-panel><trade-bar></trade-bar>`}
});
</script>
</body>
</html>
